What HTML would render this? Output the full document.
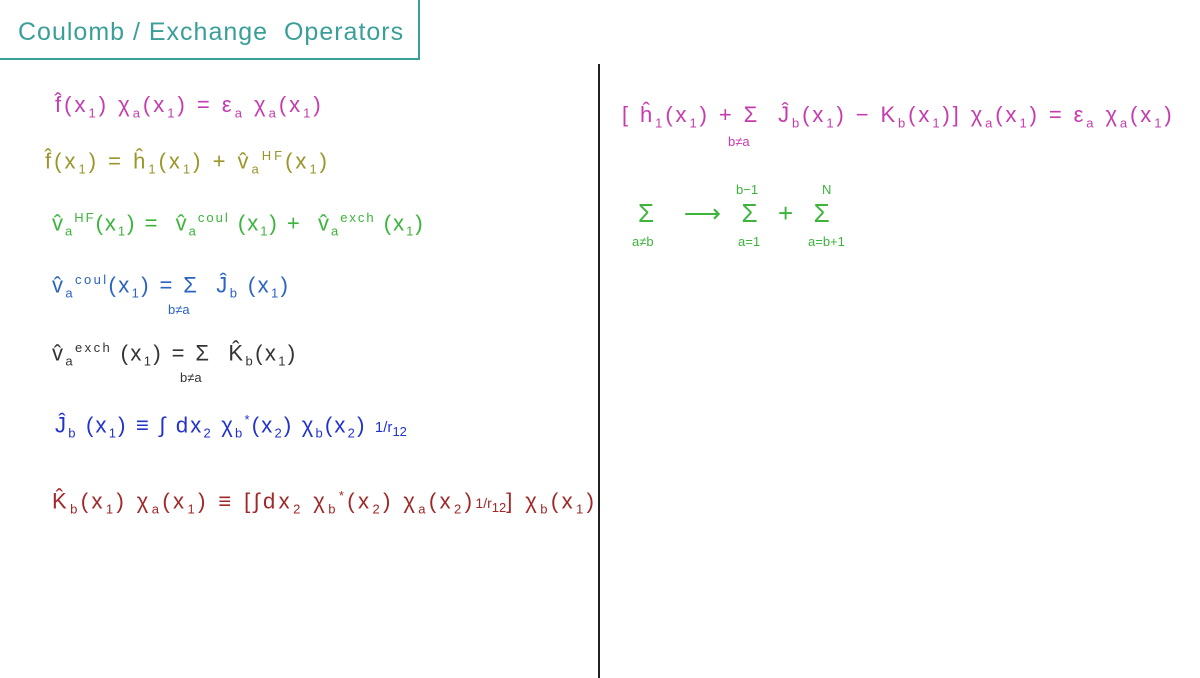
<!DOCTYPE html>
<html><head><meta charset="utf-8"><style>
body{margin:0;width:1200px;height:678px;background:#fff;position:relative;overflow:hidden;font-family:"Liberation Sans",sans-serif}
.t{position:absolute;white-space:nowrap;font-size:22px;letter-spacing:3px}
sub,sup{font-size:13px}
.s{position:absolute;font-size:13px;white-space:nowrap}
</style></head><body>
<div style="position:absolute;left:0;top:0;width:418px;height:58px;border-right:2px solid #3a9f98;border-bottom:2px solid #3a9f98"></div>
<div class="t" style="left:18px;top:18px;color:#3a9f98;font-size:25px;letter-spacing:1px">Coulomb / Exchange &nbsp;Operators</div>
<div style="position:absolute;left:598px;top:64px;width:2px;height:614px;background:#222"></div>

<div class="t" style="left:55px;top:92px;color:#c43cae;letter-spacing:3px">f̂(x<sub>1</sub>) χ<sub>a</sub>(x<sub>1</sub>) = ε<sub>a</sub> χ<sub>a</sub>(x<sub>1</sub>)</div>
<div class="t" style="left:45px;top:148px;color:#9a962a;letter-spacing:3px">f̂(x<sub>1</sub>) = ĥ<sub>1</sub>(x<sub>1</sub>) + v̂<sub>a</sub><sup>HF</sup>(x<sub>1</sub>)</div>
<div class="t" style="left:52px;top:210px;color:#3cb43c;letter-spacing:2px">v̂<sub>a</sub><sup>HF</sup>(x<sub>1</sub>) = &nbsp;v̂<sub>a</sub><sup>coul</sup> (x<sub>1</sub>) + &nbsp;v̂<sub>a</sub><sup>exch</sup> (x<sub>1</sub>)</div>
<div class="t" style="left:52px;top:272px;color:#2a64c0;letter-spacing:2.4px">v̂<sub>a</sub><sup>coul</sup>(x<sub>1</sub>) = Σ &nbsp;Ĵ<sub>b</sub> (x<sub>1</sub>)</div>
<div class="s" style="left:168px;top:302px;color:#2a64c0">b≠a</div>
<div class="t" style="left:52px;top:340px;color:#333;letter-spacing:2.4px">v̂<sub>a</sub><sup>exch</sup> (x<sub>1</sub>) = Σ &nbsp;K̂<sub>b</sub>(x<sub>1</sub>)</div>
<div class="s" style="left:180px;top:370px;color:#333">b≠a</div>
<div class="t" style="left:55px;top:412px;color:#2233cc;letter-spacing:2.2px">Ĵ<sub>b</sub> (x<sub>1</sub>) ≡ ∫ dx<sub>2</sub> χ<sub>b</sub><sup>*</sup>(x<sub>2</sub>) χ<sub>b</sub>(x<sub>2</sub>) <span style="font-size:15px;letter-spacing:0">1/r<sub>12</sub></span></div>
<div class="t" style="left:52px;top:488px;color:#a02828;font-size:22px;letter-spacing:3.4px">K̂<sub>b</sub>(x<sub>1</sub>) χ<sub>a</sub>(x<sub>1</sub>) ≡ [∫dx<sub>2</sub> χ<sub>b</sub><sup>*</sup>(x<sub>2</sub>) χ<sub>a</sub>(x<sub>2</sub>)<span style="font-size:14px;letter-spacing:0">1/r<sub>12</sub></span>] χ<sub>b</sub>(x<sub>1</sub>)</div>

<div class="t" style="left:622px;top:102px;color:#c43cae;font-size:22px;letter-spacing:2.9px">[ ĥ<sub>1</sub>(x<sub>1</sub>) + Σ &nbsp;Ĵ<sub>b</sub>(x<sub>1</sub>) − K<sub>b</sub>(x<sub>1</sub>)] χ<sub>a</sub>(x<sub>1</sub>) = ε<sub>a</sub> χ<sub>a</sub>(x<sub>1</sub>)</div>
<div class="s" style="left:728px;top:134px;color:#c43cae">b≠a</div>
<div class="t" style="left:638px;top:198px;color:#3cb43c;font-size:26px;letter-spacing:2px">Σ &nbsp;&nbsp;⟶ &nbsp;Σ &nbsp;+ &nbsp;Σ</div>
<div class="s" style="left:632px;top:234px;color:#3cb43c">a≠b</div>
<div class="s" style="left:736px;top:182px;color:#3cb43c">b−1</div>
<div class="s" style="left:738px;top:234px;color:#3cb43c">a=1</div>
<div class="s" style="left:822px;top:182px;color:#3cb43c">N</div>
<div class="s" style="left:808px;top:234px;color:#3cb43c">a=b+1</div>
</body></html>
